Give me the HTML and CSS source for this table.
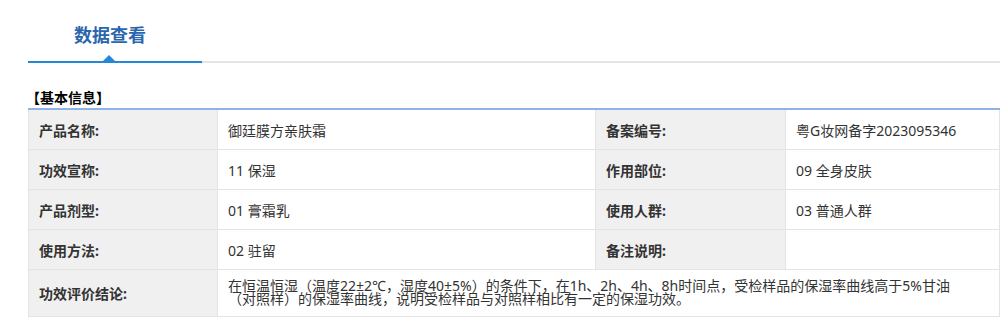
FILE: index.html
```html
<!DOCTYPE html>
<html lang="zh-CN">
<head>
<meta charset="utf-8">
<title>数据查看</title>
<link rel="stylesheet" href="styles.css">
</head>
<body>
<div class="page">
  <div class="tabs">
    <div class="tab active">数据查看<span class="caret"></span></div>
  </div>
  <div class="section-title">【基本信息】</div>
  <div class="info-grid">
    <div class="cell label">产品名称:</div>
    <div class="cell value">御廷膜方亲肤霜</div>
    <div class="cell label">备案编号:</div>
    <div class="cell value">粤G妆网备字2023095346</div>

    <div class="cell label">功效宣称:</div>
    <div class="cell value">11 保湿</div>
    <div class="cell label">作用部位:</div>
    <div class="cell value">09 全身皮肤</div>

    <div class="cell label">产品剂型:</div>
    <div class="cell value">01 膏霜乳</div>
    <div class="cell label">使用人群:</div>
    <div class="cell value">03 普通人群</div>

    <div class="cell label">使用方法:</div>
    <div class="cell value">02 驻留</div>
    <div class="cell label">备注说明:</div>
    <div class="cell value"></div>

    <div class="cell label tall">功效评价结论:</div>
    <div class="cell value tall wide"><span class="para">在恒温恒湿（温度22±2℃，湿度40±5%）的条件下，在1h、2h、4h、8h时间点，受检样品的保湿率曲线高于5%甘油（对照样）的保湿率曲线，说明受检样品与对照样相比有一定的保湿功效。</span></div>
  </div>
</div>
</body>
</html>
```
FILE: styles.css
```css
html, body {
  margin: 0;
  padding: 0;
  background: #fff;
  overflow: hidden;
}
body {
  font-family: "Noto Sans", "Noto Sans CJK SC", sans-serif;
  color: #333;
  font-size: 14px;
}
.page {
  padding-left: 28px;
}
.tabs {
  display: flex;
  border-bottom: 2px solid #e5e5e5;
  height: 63px;
  box-sizing: border-box;
}
.tab {
  position: relative;
  width: 174px;
  box-sizing: border-box;
  padding: 23px 0 0 46px;
  font-family: "Noto Sans CJK SC", sans-serif;
  font-size: 18px;
  line-height: 22px;
  font-weight: bold;
  color: #2a66ad;
  margin-bottom: -2px;
  border-bottom: 2px solid #2687d9;
}
.caret {
  position: absolute;
  left: 75px;
  bottom: 0;
  width: 0;
  height: 0;
  border-left: 6px solid transparent;
  border-right: 6px solid transparent;
  border-bottom: 6px solid #2687d9;
}
.section-title {
  margin-top: 26px;
  font-size: 14px;
  font-weight: bold;
  color: #000;
  line-height: 18px;
  text-indent: -2px;
  border-bottom: 2px solid #8fb3e6;
  padding-bottom: 1px;
}
.info-grid {
  display: grid;
  grid-template-columns: 189px 378px 190px 1fr;
  border-left: 1px solid #e4e4e4;
}
.cell {
  box-sizing: border-box;
  min-height: 40px;
  display: flex;
  align-items: center;
  padding: 0 10px;
  border-right: 1px solid #e4e4e4;
  border-bottom: 1px solid #e4e4e4;
}
.label {
  background: #f0f0f0;
  font-weight: bold;
  color: #333;
}
.value {
  background: #fff;
  color: #333;
}
.tall {
  min-height: 47px;
}
.wide {
  grid-column: 2 / 5;
}
.para {
  display: block;
  max-width: 736px;
  line-height: 12.5px;
  padding-bottom: 1px;
}
```
